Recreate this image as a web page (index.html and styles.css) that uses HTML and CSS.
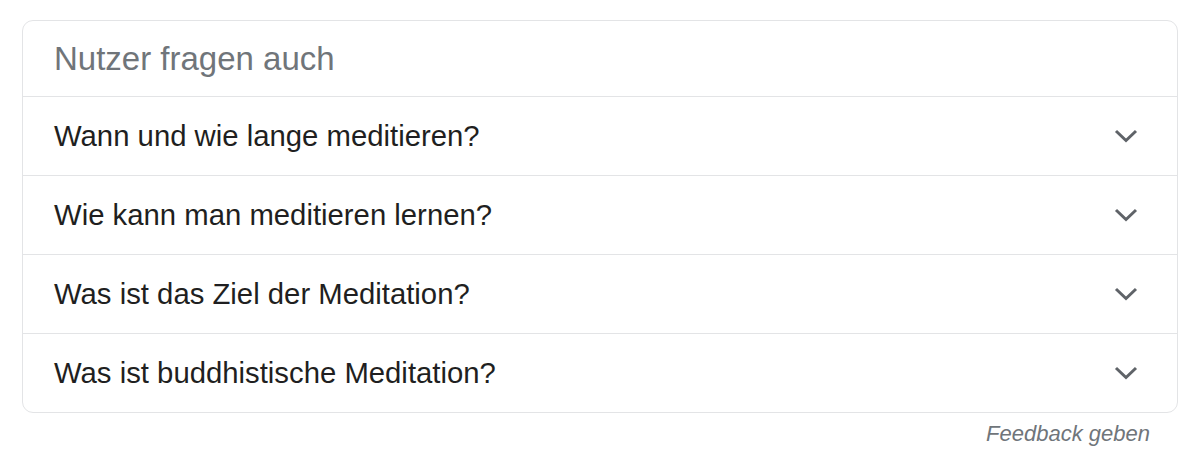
FILE: index.html
```html
<!doctype html>
<html lang="de">
  <head>
    <meta charset="utf-8" />
    <meta name="viewport" content="width=device-width, initial-scale=1" />
    <title>Nutzer fragen auch</title>
    <link rel="stylesheet" href="styles.css">
  </head>
  <body>
    <div class="paa">
      <div class="paa-head">Nutzer fragen auch</div>
      <div class="paa-row">
        <span>Wann und wie lange meditieren?</span>
        <svg class="chev" viewBox="0 0 24 14"><polyline points="2,2 12,11.5 22,2" /></svg>
      </div>
      <div class="paa-row">
        <span>Wie kann man meditieren lernen?</span>
        <svg class="chev" viewBox="0 0 24 14"><polyline points="2,2 12,11.5 22,2" /></svg>
      </div>
      <div class="paa-row">
        <span>Was ist das Ziel der Meditation?</span>
        <svg class="chev" viewBox="0 0 24 14"><polyline points="2,2 12,11.5 22,2" /></svg>
      </div>
      <div class="paa-row">
        <span>Was ist buddhistische Meditation?</span>
        <svg class="chev" viewBox="0 0 24 14"><polyline points="2,2 12,11.5 22,2" /></svg>
      </div>
    </div>
    <div class="feedback">Feedback geben</div>
  </body>
</html>
```
FILE: styles.css
```css
body {
  margin: 20px 22px 0;
  background: #fff;
  font-family: "Liberation Sans", Arial, sans-serif;
}
.paa {
  border: 1px solid #e3e4e6;
  border-radius: 11px;
}
.paa-head {
  height: 75px;
  display: flex;
  align-items: center;
  padding-left: 31px;
  font-size: 33px;
  color: #70757a;
}
.paa-row {
  height: 78px;
  border-top: 1px solid #e3e4e6;
  display: flex;
  align-items: center;
  justify-content: space-between;
  padding: 0 39px 0 31px;
  font-size: 29.3px;
  color: #1f1f21;
}
.chev {
  width: 24px;
  height: 14px;
  fill: none;
  stroke: #5f6368;
  stroke-width: 3;
}
.feedback {
  text-align: right;
  padding-right: 28px;
  margin-top: 8px;
  font-size: 22px;
  font-style: italic;
  color: #70757a;
}
```
